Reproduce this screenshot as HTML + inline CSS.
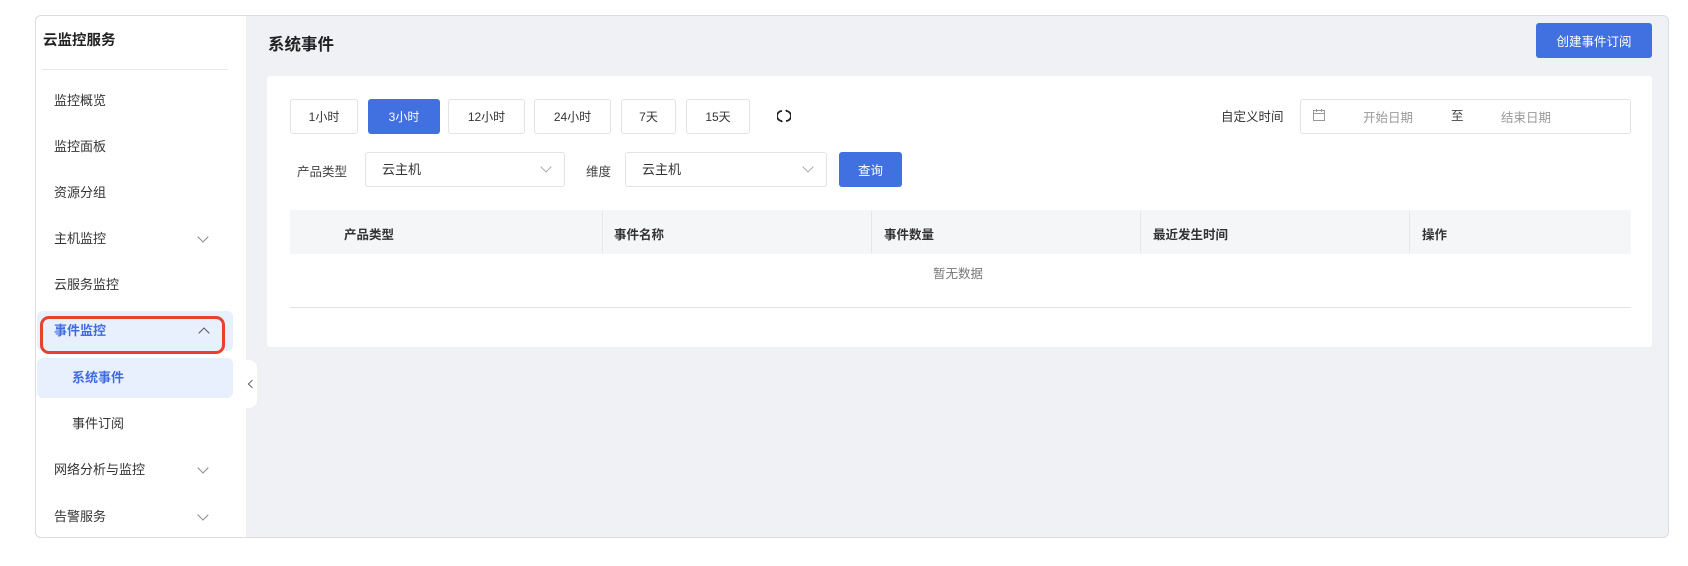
<!DOCTYPE html>
<html><head><meta charset="utf-8"><style>
*{box-sizing:border-box;margin:0;padding:0}
body{width:1688px;height:566px;background:#fff;font-family:"Liberation Sans","Noto Sans CJK SC",sans-serif;position:relative;overflow:hidden;color:#333}
.a{position:absolute}
.frame{left:35px;top:15px;width:1634px;height:523px;border:1px solid #dcdde0;border-radius:6px;background:#f0f1f4;overflow:hidden}
.side{left:35px;top:15px;width:211px;height:523px;background:#fff;border-radius:6px 0 0 6px;border:1px solid #dcdde0;border-right:none}
.mi{position:absolute;left:54px;font-size:13px;color:#333;line-height:16px}
.chev{position:absolute;left:199px;width:8px;height:8px;border-right:1.3px solid #888;border-bottom:1.3px solid #888;transform:rotate(45deg)}
.btn{position:absolute;top:99px;height:35px;border:1px solid #e2e3e6;border-radius:3px;background:#fff;font-size:12px;color:#333;display:flex;align-items:center;justify-content:center}
.sel{position:absolute;top:152px;height:35px;border:1px solid #e2e3e6;border-radius:3px;background:#fff;font-size:13px;color:#333;padding-left:16px;line-height:33px}
.sel i{position:absolute;right:14px;top:10px;width:8px;height:8px;border-right:1px solid #aaa;border-bottom:1px solid #aaa;transform:rotate(45deg)}
.lab{position:absolute;font-size:12.5px;color:#444}
.th{position:absolute;top:224px;font-size:12.5px;font-weight:bold;color:#333}
.dv{position:absolute;top:211px;width:1px;height:42px;background:#e6e7ea}
</style></head><body>
<div class="a frame"></div>
<div class="a side"></div>
<div class="a" style="left:43px;top:29px;font-size:14.5px;font-weight:bold;color:#222">云监控服务</div>
<div class="a" style="left:42px;top:69px;width:186px;height:1px;background:#e6e7ea"></div>
<div class="mi" style="top:93px">监控概览</div>
<div class="mi" style="top:139px">监控面板</div>
<div class="mi" style="top:185px">资源分组</div>
<div class="mi" style="top:231px">主机监控</div><div class="chev" style="top:233px"></div>
<div class="mi" style="top:277px">云服务监控</div>
<div class="a" style="left:37px;top:311px;width:196px;height:40px;background:#e8f0fd;border-radius:6px"></div>
<div class="a" style="left:40px;top:316px;width:185px;height:38px;border:3px solid #e8412c;border-radius:9px"></div>
<div class="mi" style="top:323px;color:#3f6be0;font-weight:bold">事件监控</div>
<div class="a" style="left:200px;top:329px;width:8px;height:8px;border-left:1.5px solid #555;border-top:1.5px solid #555;transform:rotate(45deg)"></div>
<div class="a" style="left:37px;top:358px;width:196px;height:40px;background:#e8f0fd;border-radius:6px"></div>
<div class="mi" style="top:370px;left:72px;color:#3f6be0;font-weight:bold">系统事件</div>
<div class="mi" style="top:416px;left:72px">事件订阅</div>
<div class="mi" style="top:462px">网络分析与监控</div><div class="chev" style="top:464px"></div>
<div class="mi" style="top:509px">告警服务</div><div class="chev" style="top:511px"></div>
<div class="a" style="left:242px;top:360px;width:15px;height:48px;background:#fff;border-radius:0 8px 8px 0"></div>
<div class="a" style="left:249px;top:381px;width:6px;height:6px;border-left:1.2px solid #666;border-bottom:1.2px solid #666;transform:rotate(45deg)"></div>

<div class="a" style="left:268px;top:31px;font-size:16.5px;font-weight:bold;color:#222">系统事件</div>
<div class="a" style="left:1536px;top:23px;width:116px;height:35px;background:#4170e0;border-radius:3px;color:#fff;font-size:12.5px;display:flex;align-items:center;justify-content:center">创建事件订阅</div>

<div class="a" style="left:267px;top:76px;width:1385px;height:271px;background:#fff;border-radius:3px"></div>
<div class="btn" style="left:290px;width:68px">1小时</div>
<div class="btn" style="left:368px;width:72px;background:#4170e0;border-color:#4170e0;color:#fff">3小时</div>
<div class="btn" style="left:448px;width:77px">12小时</div>
<div class="btn" style="left:534px;width:77px">24小时</div>
<div class="btn" style="left:621px;width:55px">7天</div>
<div class="btn" style="left:686px;width:64px">15天</div>
<svg class="a" style="left:777px;top:109px" width="14" height="14" viewBox="0 0 14 14"><path d="M5 2 A5 5 0 0 0 5 12 M9 2 A5 5 0 0 1 9 12" fill="none" stroke="#222" stroke-width="1.8"/><path d="M4 11 l2 1.5 -2 1z M10 3 l-2 -1.5 2 -1z" fill="#222"/></svg>
<div class="lab" style="left:1221px;top:106px;color:#333">自定义时间</div>
<div class="a" style="left:1300px;top:99px;width:331px;height:35px;border:1px solid #e2e3e6;border-radius:3px"></div>
<svg class="a" style="left:1312px;top:108px" width="14" height="14" viewBox="0 0 14 14"><rect x="1.5" y="2.5" width="11" height="10" fill="none" stroke="#999"/><path d="M1.5 5.5h11M4.5 1v3M9.5 1v3" stroke="#999"/></svg>
<div class="lab" style="left:1363px;top:107px;color:#999">开始日期</div>
<div class="lab" style="left:1451px;top:105px;color:#444">至</div>
<div class="lab" style="left:1501px;top:107px;color:#999">结束日期</div>

<div class="lab" style="left:297px;top:161px">产品类型</div>
<div class="sel" style="left:365px;width:200px">云主机<i></i></div>
<div class="lab" style="left:586px;top:161px">维度</div>
<div class="sel" style="left:625px;width:202px">云主机<i></i></div>
<div class="a" style="left:839px;top:152px;width:63px;height:35px;background:#4170e0;border-radius:3px;color:#fff;font-size:12.5px;display:flex;align-items:center;justify-content:center">查询</div>

<div class="a" style="left:290px;top:210px;width:1341px;height:44px;background:#f5f6f8"></div>
<div class="dv" style="left:602px"></div><div class="dv" style="left:871px"></div><div class="dv" style="left:1140px"></div><div class="dv" style="left:1409px"></div>
<div class="th" style="left:344px">产品类型</div>
<div class="th" style="left:614px">事件名称</div>
<div class="th" style="left:884px">事件数量</div>
<div class="th" style="left:1153px">最近发生时间</div>
<div class="th" style="left:1422px">操作</div>
<div class="lab" style="left:933px;top:263px;color:#777">暂无数据</div>
<div class="a" style="left:290px;top:307px;width:1341px;height:1px;background:#e2e3e6"></div>
</body></html>
